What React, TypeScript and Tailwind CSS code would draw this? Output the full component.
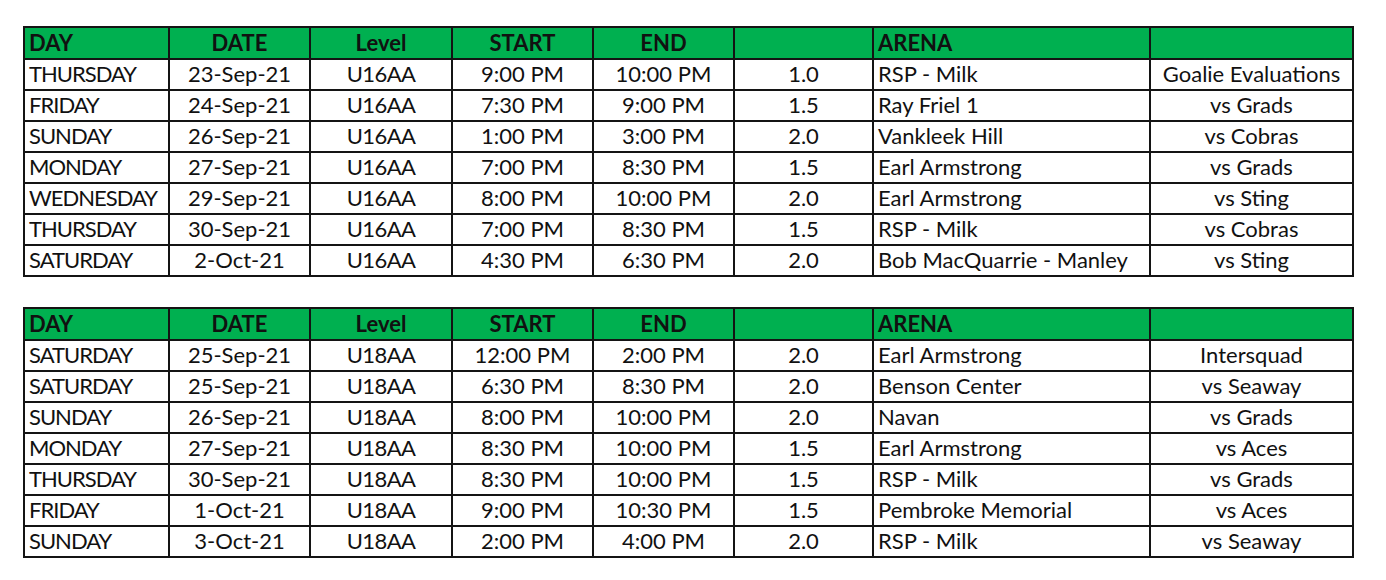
import React from "react";

type Row = [string, string, string, string, string, string, string, string];

const t1: Row[] = [
  ["THURSDAY", "23-Sep-21", "U16AA", "9:00 PM", "10:00 PM", "1.0", "RSP - Milk", "Goalie Evaluations"],
  ["FRIDAY", "24-Sep-21", "U16AA", "7:30 PM", "9:00 PM", "1.5", "Ray Friel 1", "vs Grads"],
  ["SUNDAY", "26-Sep-21", "U16AA", "1:00 PM", "3:00 PM", "2.0", "Vankleek Hill", "vs Cobras"],
  ["MONDAY", "27-Sep-21", "U16AA", "7:00 PM", "8:30 PM", "1.5", "Earl Armstrong", "vs Grads"],
  ["WEDNESDAY", "29-Sep-21", "U16AA", "8:00 PM", "10:00 PM", "2.0", "Earl Armstrong", "vs Sting"],
  ["THURSDAY", "30-Sep-21", "U16AA", "7:00 PM", "8:30 PM", "1.5", "RSP - Milk", "vs Cobras"],
  ["SATURDAY", "2-Oct-21", "U16AA", "4:30 PM", "6:30 PM", "2.0", "Bob MacQuarrie - Manley", "vs Sting"],
];

const t2: Row[] = [
  ["SATURDAY", "25-Sep-21", "U18AA", "12:00 PM", "2:00 PM", "2.0", "Earl Armstrong", "Intersquad"],
  ["SATURDAY", "25-Sep-21", "U18AA", "6:30 PM", "8:30 PM", "2.0", "Benson Center", "vs Seaway"],
  ["SUNDAY", "26-Sep-21", "U18AA", "8:00 PM", "10:00 PM", "2.0", "Navan", "vs Grads"],
  ["MONDAY", "27-Sep-21", "U18AA", "8:30 PM", "10:00 PM", "1.5", "Earl Armstrong", "vs Aces"],
  ["THURSDAY", "30-Sep-21", "U18AA", "8:30 PM", "10:00 PM", "1.5", "RSP - Milk", "vs Grads"],
  ["FRIDAY", "1-Oct-21", "U18AA", "9:00 PM", "10:30 PM", "1.5", "Pembroke Memorial", "vs Aces"],
  ["SUNDAY", "3-Oct-21", "U18AA", "2:00 PM", "4:00 PM", "2.0", "RSP - Milk", "vs Seaway"],
];

const widths = [145, 141, 142, 141, 141, 139, 277, 203];
const headers = ["DAY", "DATE", "Level", "START", "END", "", "ARENA", ""];
const leftCols = [0, 6];

const cellBase = "border-2 border-[#141414] align-bottom whitespace-nowrap overflow-hidden px-[4px] pb-[4px] leading-[22px]";

function colExtra(i: number) {
  if (i === 0) return "tracking-[-1px]";
  if (i === 2) return "tracking-[-0.6px]";
  return "";
}

function Sheet({ rows }: { rows: Row[] }) {
  return (
    <table className="border-collapse table-fixed w-[1329px]">
      <colgroup>
        {widths.map((w, i) => (
          <col key={i} style={{ width: w }} />
        ))}
      </colgroup>
      <thead>
        <tr className="h-[32px] bg-[#00b050]">
          {headers.map((h, i) => (
            <th
              key={i}
              className={`${cellBase} font-bold ${leftCols.includes(i) ? "text-left" : "text-center"}`}
            >
              {h}
            </th>
          ))}
        </tr>
      </thead>
      <tbody>
        {rows.map((r, ri) => (
          <tr key={ri} className="h-[31px] bg-white">
            {r.map((c, ci) => (
              <td
                key={ci}
                className={`${cellBase} font-normal ${colExtra(ci)} ${leftCols.includes(ci) ? "text-left" : "text-center"}`}
              >
                {c}
              </td>
            ))}
          </tr>
        ))}
      </tbody>
    </table>
  );
}

export default function App() {
  return (
    <div
      className="w-[1386px] h-[580px] bg-white text-[#111] text-[22px] pl-[23px] pt-[26px] flex flex-col gap-[30px]"
      style={{ fontFamily: "Lato, 'Open Sans', sans-serif" }}
    >
      <Sheet rows={t1} />
      <Sheet rows={t2} />
    </div>
  );
}
